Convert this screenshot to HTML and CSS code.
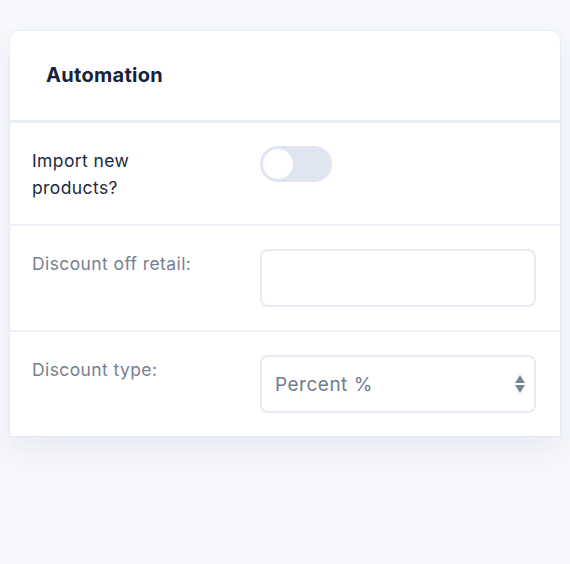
FILE: index.html
```html
<!DOCTYPE html>
<html>
<head>
<meta charset="utf-8">
<link rel="stylesheet" href="styles.css">
</head>
<body>
<div class="page">
  <section class="card">
    <header class="card-header">
      <h2 class="card-title">Automation</h2>
    </header>
    <div class="row">
      <div class="label label-dark">Import new<br>products?</div>
      <div class="control">
        <span class="toggle"><span class="knob"></span></span>
      </div>
    </div>
    <div class="row">
      <div class="label">Discount off retail:</div>
      <div class="control">
        <div class="input"></div>
      </div>
    </div>
    <div class="row row-last">
      <div class="label">Discount type:</div>
      <div class="control">
        <div class="select">
          <span class="select-value">Percent %</span>
          <svg class="arrows" width="10" height="20" viewBox="0 0 10 20">
            <path d="M5 1 L10 9 L0 9 Z" fill="#7c8594"/>
            <path d="M0 11 L10 11 L5 19 Z" fill="#7c8594"/>
          </svg>
        </div>
      </div>
    </div>
  </section>
</div>
</body>
</html>
```
FILE: styles.css
```css
html, body {
  margin: 0;
  padding: 0;
  background: #f7f8fc;
  font-family: Inter, Lato, sans-serif;
}
.page {
  padding: 31px 10px 0 10px;
  height: 564px;
  box-sizing: border-box;
}
.card {
  background: #ffffff;
  border-radius: 10px 10px 0 0;
  box-shadow: 0 14px 30px rgba(40, 60, 110, 0.07), 0 0 0 1px rgba(225, 232, 243, 0.5);
}
.card-header {
  height: 92px;
  border-bottom: 3px solid #e8eef6;
  display: flex;
  align-items: center;
  padding-left: 36px;
  box-sizing: border-box;
}
.card-title {
  margin: 0;
  font-size: 20px;
  font-weight: 700;
  letter-spacing: 0.3px;
  color: #18223a;
  padding-bottom: 1px;
}
.row {
  display: flex;
  padding: 23px 24px 23px 22px;
  border-bottom: 2px solid #edf1f7;
}
.row-last {
  border-bottom: none;
  padding-bottom: 23px;
}
.label {
  width: 228px;
  flex: none;
  font-size: 17.5px;
  letter-spacing: 0.4px;
  line-height: 27px;
  color: #778091;
  padding-top: 1px;
}
.label-dark {
  color: #1e2a3c;
}
.control {
  flex: 1;
}
.toggle {
  display: flex;
  align-items: center;
  width: 72px;
  height: 36px;
  border-radius: 18px;
  background: #dfe6f2;
  padding: 3px;
  box-sizing: border-box;
}
.knob {
  width: 30px;
  height: 30px;
  border-radius: 50%;
  background: #ffffff;
}
.input, .select {
  height: 58px;
  border: 2px solid #e6ebf5;
  border-radius: 8px;
  box-sizing: border-box;
}
.select {
  display: flex;
  align-items: center;
  justify-content: space-between;
  padding: 0 9px 0 13px;
}
.select-value {
  font-size: 19px;
  letter-spacing: 0.5px;
  color: #727b8b;
}
.arrows {
  display: block;
}
```
